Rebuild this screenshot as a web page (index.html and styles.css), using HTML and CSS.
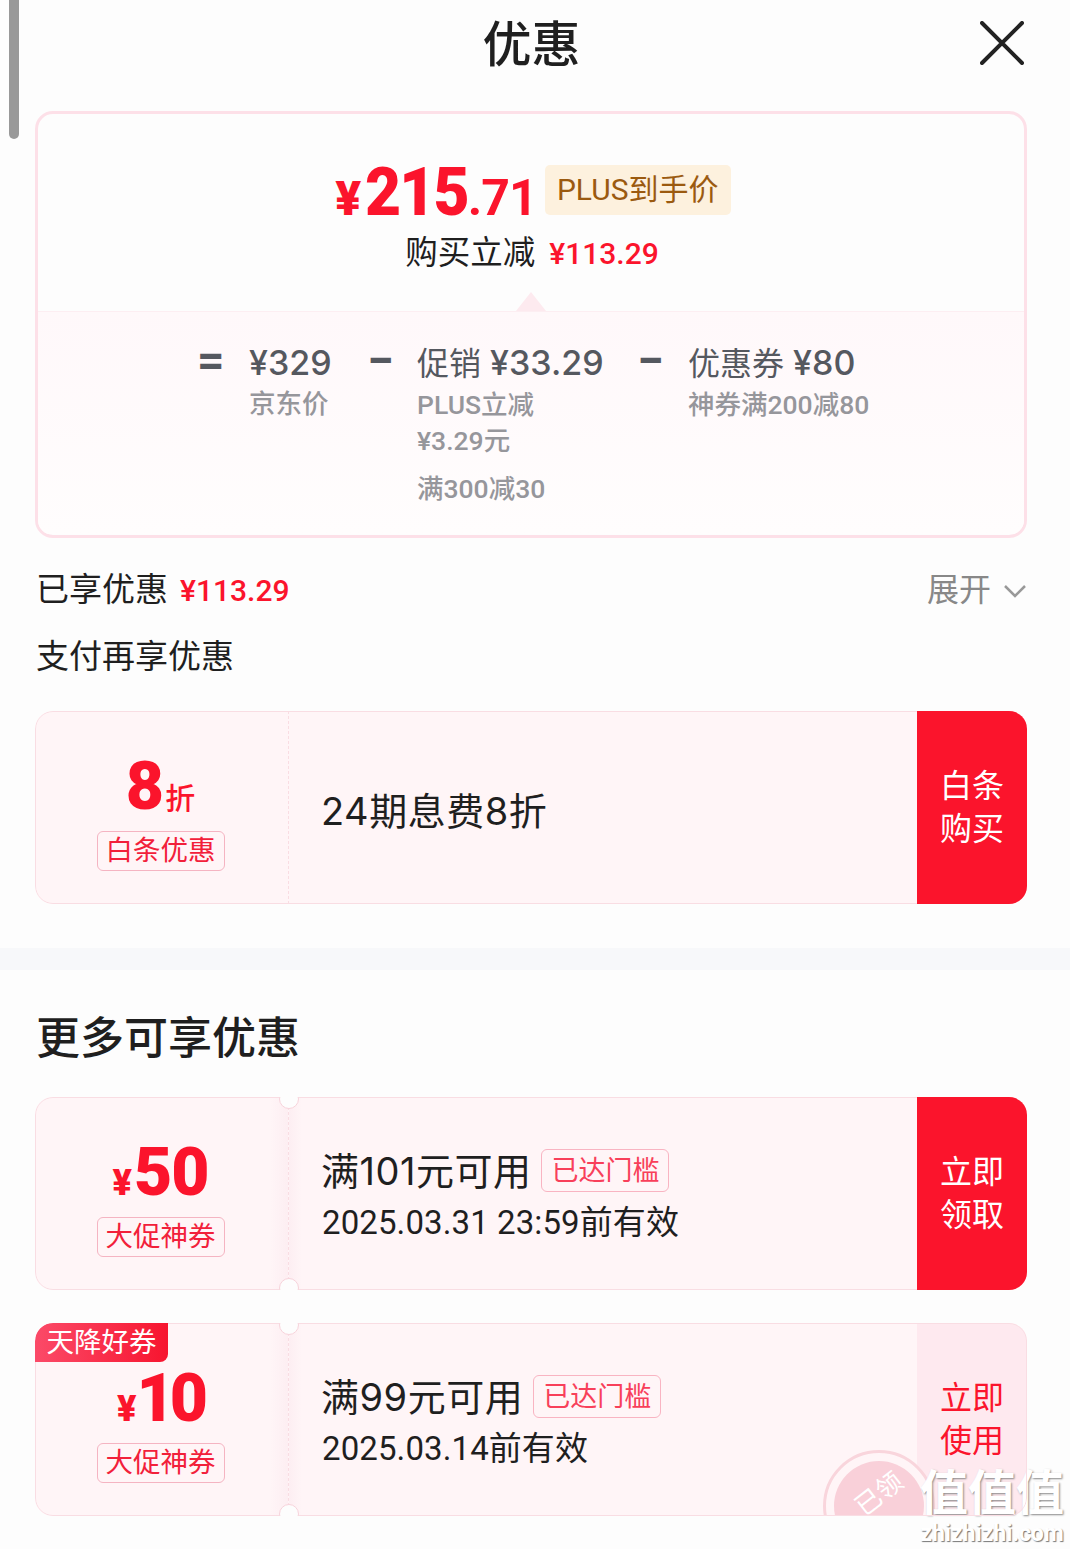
FILE: index.html
```html
<!DOCTYPE html>
<html lang="zh-CN">
<head>
    <meta charset="UTF-8">
    <title>优惠</title>
    <link rel="stylesheet" href="styles.css">
</head>
<body>
    <div class="scroll-thumb"></div>

    <header class="top">
        <h1>优惠</h1>
        <svg class="close" viewBox="0 0 44 44" width="44" height="44">
            <path d="M2 2L42 42M42 2L2 42" stroke="#222" stroke-width="4" stroke-linecap="round" fill="none"/>
        </svg>
    </header>

    <section class="summary">
        <div class="summary-top">
            <div class="price-row">
                <span class="price"><span class="cny">¥</span><span class="big">215</span><span class="cents">.71</span></span>
                <span class="plus-tag">PLUS到手价</span>
            </div>
            <div class="save-row">购买立减<span class="red">¥113.29</span></div>
        </div>
        <div class="summary-bottom">
            <span class="op eq">=</span>
            <div class="part part-a">
                <div class="part-main">¥329</div>
                <div class="part-sub">京东价</div>
            </div>
            <span class="op op-a">−</span>
            <div class="part part-b">
                <div class="part-main"><span class="zh">促销</span> ¥33.29</div>
                <div class="part-sub">PLUS立减</div>
                <div class="part-sub">¥3.29元</div>
                <div class="part-sub last">满300减30</div>
            </div>
            <span class="op op-b">−</span>
            <div class="part">
                <div class="part-main"><span class="zh">优惠券</span> ¥80</div>
                <div class="part-sub">神券满200减80</div>
            </div>
        </div>
    </section>

    <div class="enjoyed">
        <span>已享优惠<span class="red">¥113.29</span></span>
        <span class="expand">展开
            <svg viewBox="0 0 24 14" width="24" height="14"><path d="M2 2L12 12L22 2" stroke="#999" stroke-width="2.5" fill="none"/></svg>
        </span>
    </div>
    <div class="pay-title">支付再享优惠</div>

    <div class="coupon plain">
        <div class="coupon-left">
            <div class="amount"><span class="num eight">8</span><span class="unit">折</span></div>
            <div class="coupon-tag">白条优惠</div>
        </div>
        <div class="coupon-body">
            <div class="line-one">24期息费8折</div>
        </div>
        <div class="coupon-btn">白条<br>购买</div>
    </div>

    <div class="band"></div>

    <h2 class="more-title">更多可享优惠</h2>

    <div class="coupon">
        <i class="notch notch-top"></i><i class="notch notch-bottom"></i>
        <div class="coupon-left">
            <div class="amount"><span class="yen">¥</span><span class="num">50</span></div>
            <div class="coupon-tag">大促神券</div>
        </div>
        <div class="coupon-body">
            <div class="line-one">满101元可用<span class="reach">已达门槛</span></div>
            <div class="line-two">2025.03.31 23:59前有效</div>
        </div>
        <div class="coupon-btn">立即<br>领取</div>
    </div>

    <div class="coupon second">
        <i class="notch notch-top"></i><i class="notch notch-bottom"></i>
        <div class="corner">天降好券</div>
        <div class="coupon-left">
            <div class="amount"><span class="yen">¥</span><span class="num ten">10</span></div>
            <div class="coupon-tag">大促神券</div>
        </div>
        <div class="coupon-body">
            <div class="line-one">满99元可用<span class="reach">已达门槛</span></div>
            <div class="line-two">2025.03.14前有效</div>
        </div>
        <div class="coupon-btn used">立即<br>使用</div>
        <div class="stamp"><div class="stamp-disc"><span>已领</span></div></div>
    </div>

    <div class="watermark">
        <div class="wm-logo">值值值</div>
        <div class="wm-url">zhizhizhi.com</div>
    </div>
</body>
</html>
```

FILE: styles.css
```css
* {
    box-sizing: border-box;
}

html, body {
    margin: 0;
    padding: 0;
}

body {
    position: relative;
    width: 1070px;
    height: 1549px;
    overflow: hidden;
    background-color: #fdfdfd;
    color: #1f1f1f;
    font-family: Roboto, "Noto Sans CJK SC", sans-serif;
}

.red {
    color: #fb142c;
    font-size: 30px;
    font-weight: 500;
    margin-left: 12px;
}

.scroll-thumb {
    position: absolute;
    left: 9px;
    top: 0;
    width: 10px;
    height: 139px;
    background-color: #999;
    border-radius: 0 0 5px 5px;
}

/* header */
.top {
    position: relative;
    height: 111px;
    padding: 11px 7px 0 0;
    text-align: center;
}

.top h1 {
    margin: 0;
    font-size: 49px;
    line-height: 70px;
    font-weight: 500;
}

.close {
    position: absolute;
    left: 980px;
    top: 21px;
}

/* price box */
.summary {
    margin: 0 43px 0 35px;
    height: 427px;
    border: 3px solid #fde0e8;
    border-radius: 18px;
    overflow: hidden;
}

.summary-top {
    height: 198px;
    padding-top: 51px;
    border-bottom: 1px solid #fdeef2;
    position: relative;
}

.summary-top::after {
    content: "";
    position: absolute;
    left: 478px;
    bottom: 0;
    width: 30px;
    height: 19px;
    background-color: #fdeaef;
    clip-path: polygon(50% 0, 100% 100%, 0 100%);
}

.price-row {
    display: flex;
    justify-content: center;
    align-items: center;
    height: 50px;
    padding-left: 4px;
}

.price {
    color: #fb142c;
    font-weight: 900;
    line-height: 50px;
    display: flex;
    align-items: baseline;
    padding-top: 11px;
}

.cny {
    font-size: 48px;
    margin-right: 4px;
}

.big {
    display: inline-block;
    font-size: 67px;
    letter-spacing: -2px;
    transform: scaleX(0.93);
    transform-origin: left;
    margin-right: -8px;
}

.cents {
    display: inline-block;
    font-size: 50px;
    font-weight: 700;
    letter-spacing: -1px;
}

.plus-tag {
    margin-left: 8px;
    width: 186px;
    height: 50px;
    line-height: 50px;
    text-align: center;
    font-size: 30px;
    color: #9b5a10;
    background-color: #fdf1de;
    border-radius: 5px;
}

.save-row {
    margin-top: 15px;
    padding-left: 2px;
    text-align: center;
    font-size: 32.5px;
    line-height: 46px;
}

.save-row .red {
    margin-left: 14px;
}

.summary-bottom {
    display: flex;
    height: 222px;
    padding: 28px 0 0 159px;
    background: linear-gradient(#fff8fa, #fffdfd);
    color: #55585f;
}

.op {
    font-size: 48px;
    line-height: 42px;
    font-weight: 700;
}

.eq {
    width: 52px;
}

.op-a {
    width: 50px;
}

.op-b {
    width: 51px;
}

.part-a {
    width: 118px;
}

.part-b {
    width: 220px;
}

.part-main {
    font-family: Inter, "Noto Sans CJK SC", sans-serif;
    font-size: 34px;
    line-height: 46px;
    font-weight: 500;
    white-space: nowrap;
}

.part-main .zh {
    font-size: 32px;
    font-weight: 400;
}

.part-sub {
    font-size: 26.5px;
    line-height: 36px;
    font-weight: 500;
    color: #96969b;
    white-space: nowrap;
}

.part-sub.last {
    margin-top: 12px;
}

/* rows under the box */
.enjoyed {
    display: flex;
    justify-content: space-between;
    align-items: center;
    margin: 26px 43px 0 36px;
    height: 46px;
    font-size: 33px;
}

.expand {
    display: flex;
    align-items: center;
    gap: 12px;
    font-size: 32px;
    color: #888;
}

.expand svg {
    margin-top: 7px;
}

.pay-title {
    margin: 24px 0 31px 36px;
    font-size: 33px;
    line-height: 46px;
}

/* coupons */
.coupon {
    position: relative;
    display: flex;
    width: 992px;
    height: 193px;
    margin-left: 35px;
    background-color: #fff5f7;
    border-radius: 18px;
    overflow: hidden;
}

/* thin outline sits on top so the red button can cover it */
.coupon::before {
    content: "";
    position: absolute;
    inset: 0;
    border: 1px solid #f9dde3;
    border-radius: 18px;
    z-index: 1;
}

.coupon-left {
    width: 254px;
    flex: none;
    display: flex;
    flex-direction: column;
    align-items: center;
    padding: 35px 2px 0 0;
    border-right: 1px dashed #f9dde3;
    background: linear-gradient(90deg, #fff5f7 93%, #fdeef2);
}

.coupon.plain .coupon-left {
    background: none;
}

.amount {
    display: flex;
    align-items: baseline;
    height: 85px;
    line-height: 82px;
    color: #fb142c;
    font-weight: 900;
}

.num {
    font-size: 66px;
    letter-spacing: -1px;
}

.ten {
    letter-spacing: -5px;
    margin: 0 1px 0 -2px;
}

.yen {
    font-size: 36px;
    margin-right: 2px;
}

.unit {
    font-size: 30px;
    font-weight: 500;
    margin-left: 2px;
}

.coupon-tag {
    width: 128px;
    height: 40px;
    line-height: 38px;
    text-align: center;
    font-size: 27.5px;
    color: #f2203a;
    border: 1px solid #f5b4c2;
    border-radius: 6px;
}

.coupon-body {
    flex: 1;
    display: flex;
    flex-direction: column;
    justify-content: center;
    padding: 6px 0 0 32px;
    background: linear-gradient(90deg, #fdeef2, #fff5f7 13px);
}

.coupon.plain .coupon-body {
    background: none;
}

.line-one {
    display: flex;
    align-items: center;
    font-family: Inter, "Noto Sans CJK SC", sans-serif;
    font-size: 38px;
    line-height: 50px;
    letter-spacing: 0.5px;
    white-space: nowrap;
}

.line-two {
    margin-top: 2px;
    padding-left: 1px;
    font-size: 33px;
    line-height: 50px;
    letter-spacing: 0.1px;
}

.reach {
    margin-left: 10px;
    width: 128px;
    height: 43px;
    line-height: 41px;
    text-align: center;
    font-size: 27px;
    letter-spacing: 0;
    color: #f8405a;
    border: 1px solid #f9b4c2;
    border-radius: 6px;
}

.coupon-btn {
    position: relative;
    z-index: 2;
    width: 110px;
    flex: none;
    display: flex;
    align-items: center;
    justify-content: center;
    text-align: center;
    font-size: 32px;
    line-height: 43px;
    color: #fff;
    background-color: #fb142c;
}

.coupon-btn.used {
    z-index: 0;
    color: #fb142c;
    background-color: #fee9ef;
}

.notch {
    position: absolute;
    left: 244px;
    width: 20px;
    height: 20px;
    border: 1px solid #f7d3db;
    border-radius: 50%;
    background-color: #fdfdfd;
    z-index: 2;
}

.notch-top {
    top: -8px;
}

.notch-bottom {
    bottom: -8px;
}

.band {
    height: 22px;
    margin-top: 44px;
    background-color: #f7f8fa;
}

.more-title {
    margin: 0 0 27px 36px;
    padding-top: 38px;
    font-size: 44px;
    line-height: 62px;
    font-weight: 500;
}

.second {
    margin-top: 33px;
}

.corner {
    position: absolute;
    left: 0;
    top: 0;
    width: 133px;
    height: 39px;
    line-height: 39px;
    text-align: center;
    font-size: 27.5px;
    color: #fff;
    background: linear-gradient(90deg, #fb4a68, #f7152f);
    border-radius: 18px 0 8px 0;
    z-index: 3;
}

.stamp {
    position: absolute;
    left: 788px;
    top: 127px;
    width: 112px;
    height: 112px;
    padding: 8px;
    border: 3px solid #f9d5dc;
    border-radius: 50%;
    background-color: #fff5f7;
}

.stamp-disc {
    height: 90px;
    border-radius: 50%;
    background-color: #f9d0d9;
    color: #fff;
    font-size: 26px;
    line-height: 66px;
    text-align: center;
}

.stamp-disc span {
    display: inline-block;
    transform: rotate(-38deg);
}

/* site watermark */
.watermark {
    position: absolute;
    left: 917px;
    top: 1466px;
    width: 150px;
    text-align: center;
    color: #fff;
}

.wm-logo {
    font-size: 48px;
    line-height: 56px;
    font-weight: 700;
    text-shadow: 1px 1px 2px #888;
}

.wm-url {
    font-size: 23px;
    line-height: 24px;
    font-weight: 700;
    text-shadow: 1px 1px 1px #777;
}
```
